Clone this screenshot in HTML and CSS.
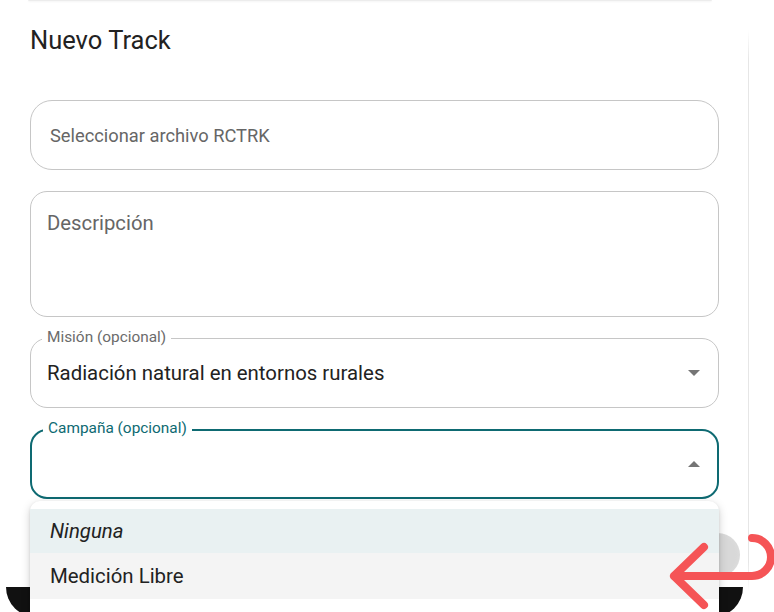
FILE: index.html
```html
<!DOCTYPE html>
<html lang="es">
<head>
<meta charset="utf-8">
<title>Nuevo Track</title>
<link rel="stylesheet" href="styles.css">
</head>
<body>
<div class="top-edge"></div>
<div class="card">
  <h1 class="title">Nuevo Track</h1>
  <div class="fields">
    <div class="field field-file">
      <span class="placeholder">Seleccionar archivo RCTRK</span>
    </div>
    <div class="field field-area">
      <span class="placeholder placeholder-lg">Descripción</span>
    </div>
    <div class="field field-select">
      <span class="label">Misión (opcional)</span>
      <span class="value">Radiación natural en entornos rurales</span>
      <span class="caret caret-down"></span>
    </div>
    <div class="field field-select focused">
      <span class="label">Campaña (opcional)</span>
      <span class="value"></span>
      <span class="caret caret-up"></span>
    </div>
  </div>
  <div class="footer-btn"></div>
  <div class="thumb"></div>
  <div class="menu">
    <div class="menu-item selected"><em>Ninguna</em></div>
    <div class="menu-item hover">Medición Libre</div>
  </div>
</div>
<svg class="annot" width="774" height="612" viewBox="0 0 774 612">
  <path d="M704 547 L674 576 L704 605 M674 576 H752 A19 19 0 0 0 752 538" fill="none" stroke="#f55456" stroke-width="8" stroke-linecap="round" stroke-linejoin="round"/>
</svg>
</body>
</html>
```
FILE: styles.css
```css
html, body {
  margin: 0;
  padding: 0;
  background: #fff;
  width: 774px;
  height: 612px;
  overflow: hidden;
  font-family: Roboto, "Noto Sans", Arial, sans-serif;
  position: relative;
}

.top-edge {
  margin-left: 28px;
  width: 684px;
  height: 1px;
  background: #ececec;
  box-shadow: 0 1px 2px rgba(0,0,0,0.06);
  border-radius: 0 0 4px 4px;
}

.card {
  position: relative;
  width: 689px;
  padding: 0 29px 0 30px;
  border-left: 1px solid #e8e8e8;
  border-right: 1px solid #e8e8e8;
  border-image: linear-gradient(to bottom, rgba(232,232,232,0) 30px, #e6e6e6 60px, #e6e6e6 560px, rgba(232,232,232,0) 590px) 1;
  margin-left: -1px;
  height: 640px;
  box-sizing: content-box;
}

.title {
  margin: 0;
  padding-top: 24px;
  font-size: 25.5px;
  font-weight: 400;
  color: #222;
  line-height: 30px;
}

.fields {
  display: flex;
  flex-direction: column;
  gap: 21px;
  margin-top: 45px;
}

.field {
  position: relative;
  box-sizing: border-box;
  height: 70px;
  border: 1px solid #c6c6c6;
  border-radius: 17px;
  display: flex;
  align-items: center;
  padding: 0 18px 0 16px;
}

.field-file {
  border-radius: 22px;
  padding-left: 19px;
}

.field-area {
  height: 126px;
  align-items: flex-start;
  padding-top: 19px;
}

.placeholder {
  color: #666;
  font-size: 18.3px;
}

.placeholder-lg {
  font-size: 20.3px;
}

.label {
  position: absolute;
  top: -11px;
  left: 11px;
  padding: 0 5px;
  background: #fff;
  color: #6b6b6b;
  font-size: 15.4px;
  line-height: 19px;
}

.value {
  color: #222;
  font-size: 20.4px;
  flex: 1;
}

.caret {
  width: 0;
  height: 0;
  border-left: 6px solid transparent;
  border-right: 6px solid transparent;
}

.caret-down {
  border-top: 6px solid #757575;
}

.caret-up {
  border-bottom: 6px solid #757575;
}

.focused {
  border: 2px solid #0e6a72;
  padding-left: 15px;
  padding-right: 17px;
}

.focused .label {
  color: #0e6a72;
  top: -12px;
  left: 11px;
}

.footer-btn {
  margin: 88px -24px 0 -24px;
  height: 30px;
  background: #111;
  border-radius: 0 0 30px 30px;
}

.thumb {
  position: absolute;
  left: 696px;
  top: 532px;
  width: 44px;
  height: 44px;
  border-radius: 50%;
  background: radial-gradient(circle at 45% 50%, #d8d8d8 60%, #e2e2e2 100%);
}

.menu {
  position: absolute;
  left: 30px;
  top: 500px;
  width: 689px;
  height: 130px;
  background: #fff;
  border-radius: 10px;
  padding-top: 8px;
  box-sizing: border-box;
  box-shadow: 0 3px 10px rgba(0,0,0,0.18), 0 1px 3px rgba(0,0,0,0.1);
}

.menu-item {
  height: 44px;
  display: flex;
  align-items: center;
  padding-left: 20px;
  font-size: 20.4px;
  color: #222;
}

.menu-item em {
  font-style: italic;
}

.selected {
  background: #e9f1f2;
}

.hover {
  height: 46px;
  background: #f4f4f4;
}

.annot {
  position: absolute;
  left: 0;
  top: 0;
  pointer-events: none;
}
```
